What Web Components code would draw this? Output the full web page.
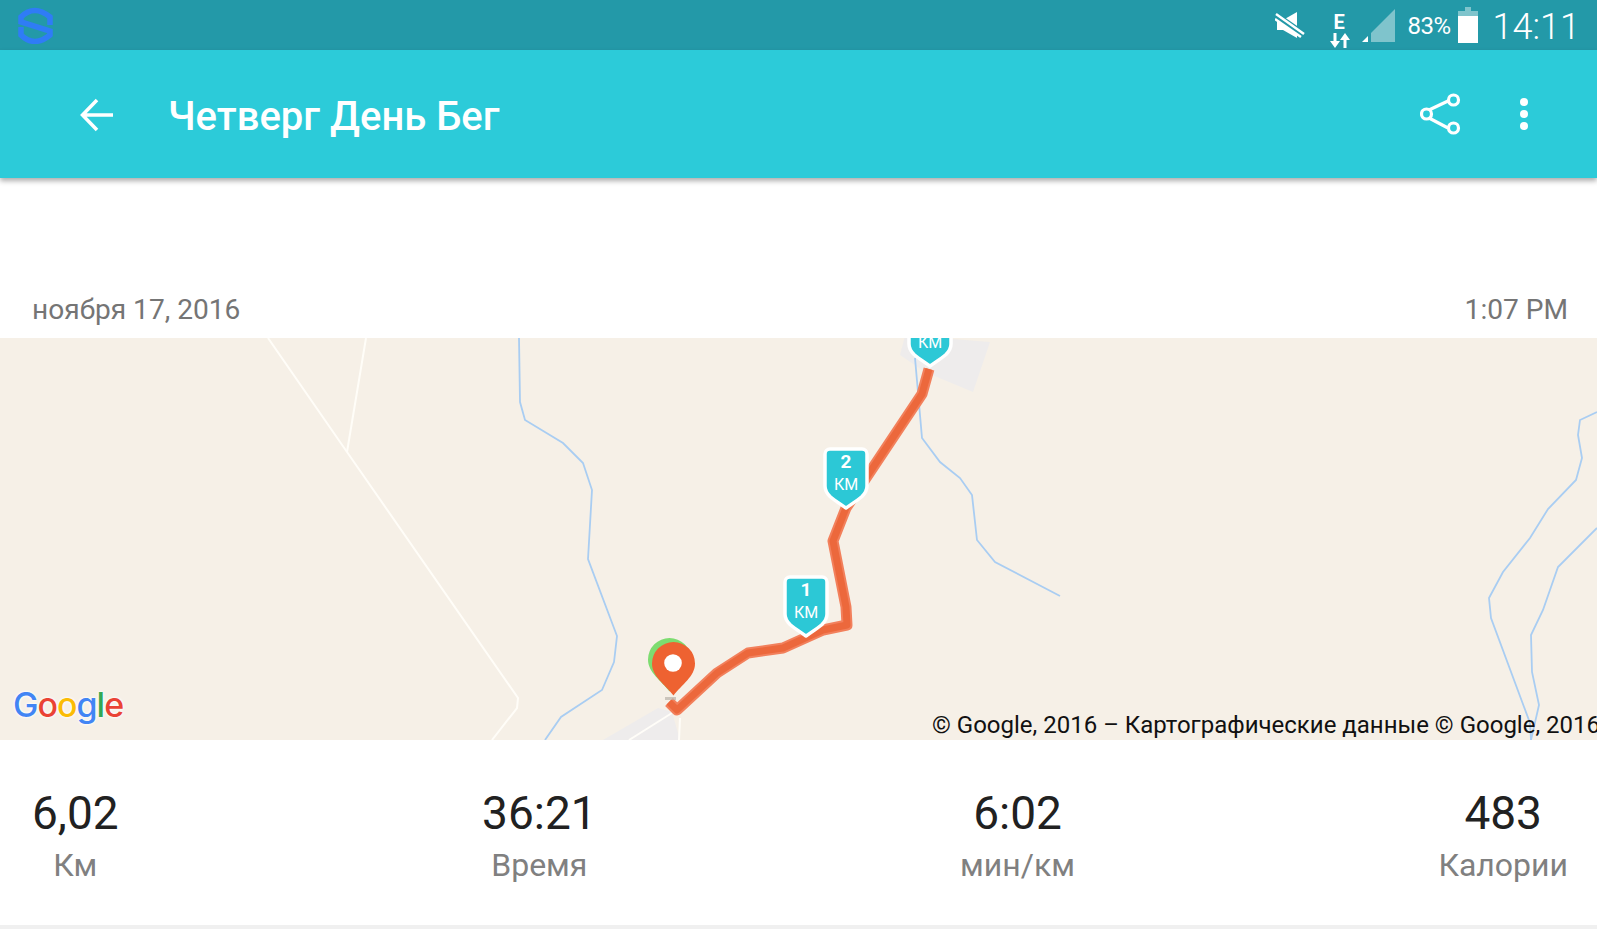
<!DOCTYPE html>
<html lang="ru">
<head>
<meta charset="utf-8">
<title>Четверг День Бег</title>
<style>
  html, body { margin: 0; height: 100%; background: #fff; overflow: hidden; }
  body { font-family: Roboto, "Noto Sans", sans-serif; display: flex; flex-direction: column; }
</style>
</head>
<body>
<status-bar></status-bar>
<app-bar title="Четверг День Бег"></app-bar>
<date-row date="ноября 17, 2016" time="1:07 PM"></date-row>
<route-map>
  <km-pin style="left:907px;top:-33px" num="3"></km-pin>
  <km-pin style="left:823px;top:109px" num="2"></km-pin>
  <km-pin style="left:783px;top:237px" num="1"></km-pin>
</route-map>
<stat-row>
  <stat-item value="6,02" label="Км"></stat-item>
  <stat-item value="36:21" label="Время"></stat-item>
  <stat-item value="6:02" label="мин/км"></stat-item>
  <stat-item value="483" label="Калории"></stat-item>
</stat-row>

<script>
class StatusBar extends HTMLElement {
  constructor() {
    super();
    this.attachShadow({ mode: 'open' });
    this.shadowRoot.innerHTML = /*html*/ `
      <style>
        :host { display: flex; align-items: center; height: 50px; flex: none; background: #2399a8; color: #fff; padding: 0 17px 0 18px; }
        .logo { margin-right: auto; filter: blur(.4px); }
        svg { display: block; }
        .net { position: relative; width: 20px; height: 36px; margin-left: 25px; }
        .net b { position: absolute; left: 4px; top: 5px; font: 700 20px/20px Roboto, sans-serif; }
        .net svg { position: absolute; left: 0; top: 26px; }
        .sig { margin-left: 12px; }
        .pct { font: 400 24px/1 Roboto, sans-serif; margin: 2px 0 0 13px; letter-spacing: -0.5px; }
        .bat { margin-left: 7px; }
        .clock { font: 300 36px/1 Roboto, sans-serif; margin: 3px 0 0 15px; }
        .mute { margin-top: 0; }
      </style>
      <svg class="logo" width="36" height="38" viewBox="0 0 36 38" fill="none" stroke="#2f7cf6" stroke-width="5.500">
        <path d="M32 19V11C27 7 22 4.500 17 4.500S7 7 3 11v5L32 25v4C27 33 22 35.500 17 35.500S7 33 3 29V21"/>
      </svg>
      <svg class="mute" width="30" height="28" viewBox="0 0 30 28" fill="#fff">
        <path d="M2 9h6l14-8v26L8 19H2z"/>
        <path d="M0 4 29 24" stroke="#2399a8" stroke-width="7"/>
        <path d="M1 3 29 23M0 8 26 26" stroke="#fff" stroke-width="2.500" fill="none"/>
      </svg>
      <div class="net">
        <b>E</b>
        <svg width="20" height="15" viewBox="0 0 20 15" fill="#fff">
          <path d="M3.500 0h3v8h3.500L5 15 0 8h3.500zM13.500 15h3V7H20L15 0l-5 7h3.500z"/>
        </svg>
      </div>
      <svg class="sig" width="33" height="34" viewBox="0 0 33 34">
        <path d="M0 34 6 28V34z" fill="#fff"/>
        <path d="M9 25 33 1V34H9z" fill="#fff" fill-opacity=".42"/>
      </svg>
      <span class="pct">83%</span>
      <svg class="bat" width="20" height="36" viewBox="0 0 20 36" fill="#fff">
        <path d="M7 0h6v4h7v5H0V4h7z" fill-opacity=".42"/>
        <path d="M0 9h20v27H0z"/>
      </svg>
      <span class="clock">14:11</span>
    `;
  }
}

class AppBar extends HTMLElement {
  constructor() {
    super();
    this.attachShadow({ mode: 'open' });
    this.shadowRoot.innerHTML = /*html*/ `
      <style>
        :host { display: flex; align-items: center; height: 128px; flex: none; background: #2ccbd9; color: #fff; box-shadow: 0 3px 5px rgba(0,0,0,.32); position: relative; z-index: 1; }
        .back { margin: 2px 0 0 80px; display: block; }
        h1 { margin: 5px auto 0 55px; font: 500 40px/1 Roboto, sans-serif; }
        .share { display: block; margin-right: 58px; }
        .more { display: block; margin-right: 69px; }
      </style>
      <svg class="back" width="33" height="34" viewBox="0 0 33 34" fill="none" stroke="#fff" stroke-width="3.500">
        <path d="M33 17H3M17 2 2.500 17 17 32"/>
      </svg>
      <h1 id="title"></h1>
      <svg class="share" width="42" height="42" viewBox="0 0 42 42" fill="none" stroke="#fff" stroke-width="3.200">
        <path d="M9 17 28 8M9 25l19 10"/>
        <circle cx="33.500" cy="7" r="5"/><circle cx="6.500" cy="21" r="5"/><circle cx="33.500" cy="35" r="5"/>
      </svg>
      <svg class="more" width="8" height="32" viewBox="0 0 8 32" fill="#fff">
        <circle cx="4" cy="4" r="4"/><circle cx="4" cy="16" r="4"/><circle cx="4" cy="28" r="4"/>
      </svg>
    `;
    this.shadowRoot.getElementById('title').textContent = this.getAttribute('title');
  }
}

class DateRow extends HTMLElement {
  constructor() {
    super();
    this.attachShadow({ mode: 'open' });
    this.shadowRoot.innerHTML = /*html*/ `
      <style>
        :host { display: flex; justify-content: space-between; align-items: flex-end; height: 160px; flex: none; padding: 0 29px 0 32px; box-sizing: border-box; color: #757575; font: 400 28.100px/1 Roboto, sans-serif; }
        span { margin-bottom: 14px; }
      </style>
      <span id="d"></span><span id="t"></span>
    `;
    this.shadowRoot.getElementById('d').textContent = this.getAttribute('date');
    this.shadowRoot.getElementById('t').textContent = this.getAttribute('time');
  }
}

class RouteMap extends HTMLElement {
  constructor() {
    super();
    this.attachShadow({ mode: 'open' });
    // svg coords are page x, page y minus 338 (top of the map)
    this.shadowRoot.innerHTML = /*html*/ `
      <style>
        :host { display: block; position: relative; height: 402px; flex: none; background: #f6f0e7; overflow: hidden; }
        .base { position: absolute; left: 0; top: 0; }
        .google { position: absolute; left: 13px; top: 350px; font: 500 34px/1 Inter, Roboto, sans-serif; letter-spacing: -1px; text-shadow: 0 0 3px #fff, 0 0 3px #fff; }
        .copy { position: absolute; left: 932px; top: 375px; font: 400 24px/1 Roboto, sans-serif; color: #111; white-space: nowrap; }
      </style>
      <svg class="base" width="1597" height="402" viewBox="0 0 1597 402" fill="none">
        <path d="M915 -2 990 4 973 54 925 34 900 17 905 -2zM603 402 658 370 672 374 680 402z" fill="#eeecec"/>
        <g stroke="#fffdf8" stroke-width="2">
          <path d="M268 0 347 114 518 360 517 370 492 402"/>
          <path d="M366 0 347 114"/>
          <path d="M629 402 672 375M680 380 679 402"/>
        </g>
        <g stroke="#a9cdf2" stroke-width="1.800">
          <path d="M519 0 520 64 525 82 563 105 583 125 592 152 588 221 617 298 614 324 602 352 561 379 545 402"/>
          <path d="M915 20 922 100 940 124 960 140 972 157 977 202 995 224 1060 258"/>
          <path d="M1597 74 1580 82 1578 97 1582 120 1576 142 1548 171 1530 200 1503 234 1489 260 1491 280 1530 385 1531 402"/>
          <path d="M1597 190 1558 229 1543 272 1531 297 1532 334 1539 367 1531 402"/>
        </g>
        <g stroke-linejoin="round">
          <path d="M929 31 922 56 846 170 833 203 846 269 847 287 823 292 783 310 748 315 717 335 677 372 669 364" stroke="#f2805c" stroke-width="11"/>
          <path d="M929 31 922 56 846 170 833 203 846 269 847 287 823 292 783 310 748 315 717 335 677 372 669 364" stroke="#ec683c" stroke-width="7"/>
        </g>
        <path d="M648 321.500a21.500 21.500 0 0 1 43 0c0 13-13 21-21.500 32-8.500-11-21.500-19-21.500-32z" fill="#7ddc70"/>
        <path d="M652 325.500a21.500 21.500 0 0 1 43 0c0 13-13 21-21.500 32-8.500-11-21.500-19-21.500-32z" fill="#ee6231"/>
        <circle cx="673" cy="325" r="8.800" fill="#fff"/>
        <path d="M665 359h11v3h-11z" fill="#b9b2aa" fill-opacity=".7"/>
      </svg>
      <slot></slot>
      <div class="google"><span style="color:#4285f4">G</span><span style="color:#ea4335">o</span><span style="color:#fbbc05">o</span><span style="color:#4285f4">g</span><span style="color:#34a853">l</span><span style="color:#ea4335">e</span></div>
      <div class="copy">© Google, 2016 – Картографические данные © Google, 2016</div>
    `;
  }
}

class KmPin extends HTMLElement {
  constructor() {
    super();
    this.attachShadow({ mode: 'open' });
    this.shadowRoot.innerHTML = /*html*/ `
      <style>
        :host { display: block; position: absolute; width: 46px; height: 63px; color: #fff; text-align: center; }
        svg { position: absolute; left: 0; top: 0; }
        div { position: relative; padding-top: 5px; font: 700 19px/20px Roboto, sans-serif; }
        small { display: block; font: 400 16px/18px Roboto, sans-serif; margin-top: 4px; }
      </style>
      <svg width="46" height="63" viewBox="0 0 46 63">
        <path d="M7 2h32a5 5 0 0 1 5 5v32c0 5-2 7.500-5 10.500C35 53 28 57.500 23 61 18 57.500 11 53 7 49.500 4 46.500 2 44 2 39V7a5 5 0 0 1 5-5z" fill="#2cc8d6" stroke="#fff" stroke-width="3.500" stroke-linejoin="round"/>
      </svg>
      <div><span id="n"></span><small>КМ</small></div>
    `;
    this.shadowRoot.getElementById('n').textContent = this.getAttribute('num');
  }
}

class StatRow extends HTMLElement {
  constructor() {
    super();
    this.attachShadow({ mode: 'open' });
    this.shadowRoot.innerHTML = /*html*/ `
      <style>
        :host { display: flex; justify-content: space-between; flex: 1; box-sizing: border-box; padding: 46px 29px 0 32px; border-bottom: 4px solid #f0f0f0; }
      </style>
      <slot></slot>
    `;
  }
}

class StatItem extends HTMLElement {
  constructor() {
    super();
    this.attachShadow({ mode: 'open' });
    this.shadowRoot.innerHTML = /*html*/ `
      <style>
        :host { display: flex; flex-direction: column; align-items: center; font-family: Roboto, sans-serif; }
        .v { font-size: 46px; line-height: 54px; color: #212121; }
        .l { font-size: 32px; line-height: 38px; margin-top: 6px; color: #808080; }
      </style>
      <span class="v" id="v"></span><span class="l" id="l"></span>
    `;
    this.shadowRoot.getElementById('v').textContent = this.getAttribute('value');
    this.shadowRoot.getElementById('l').textContent = this.getAttribute('label');
  }
}

customElements.define('status-bar', StatusBar);
customElements.define('app-bar', AppBar);
customElements.define('date-row', DateRow);
customElements.define('route-map', RouteMap);
customElements.define('km-pin', KmPin);
customElements.define('stat-row', StatRow);
customElements.define('stat-item', StatItem);
</script>
</body>
</html>
